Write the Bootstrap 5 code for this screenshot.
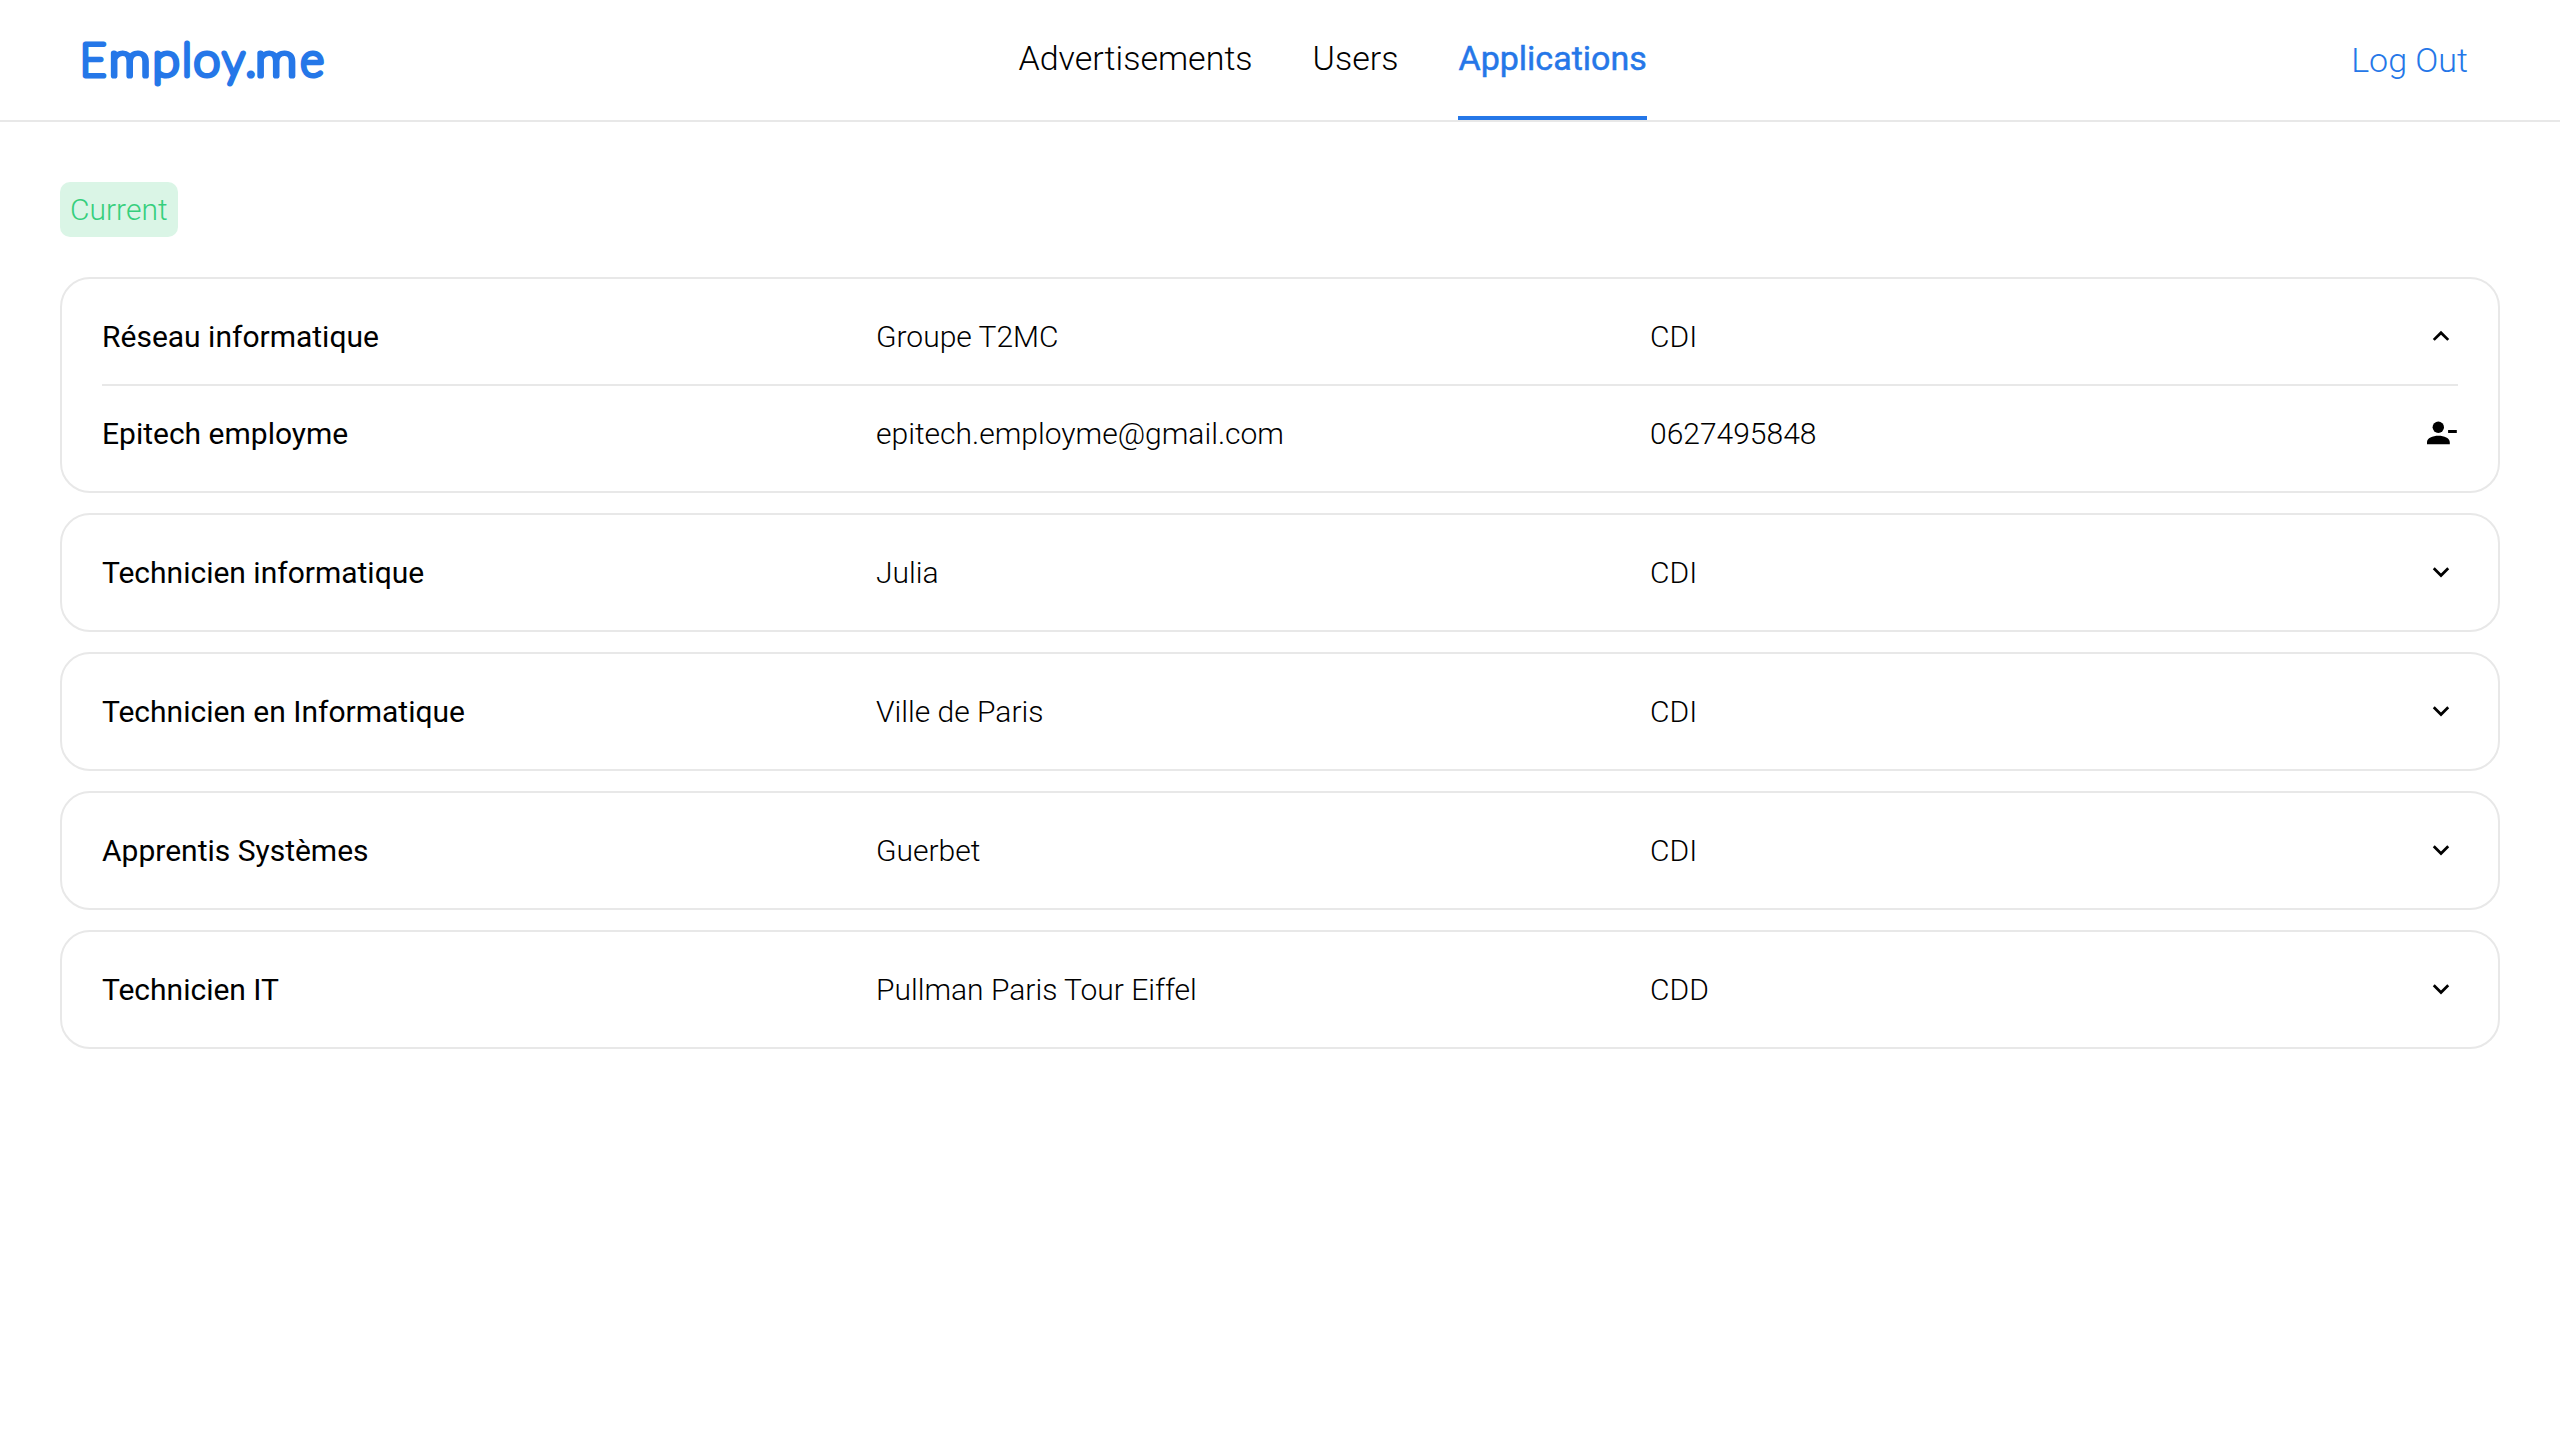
<!DOCTYPE html>
<html lang="en">
<head>
<meta charset="utf-8">
<meta name="viewport" content="width=device-width, initial-scale=1">
<title>Employ.me</title>
<link rel="stylesheet" href="https://cdn.jsdelivr.net/npm/bootstrap@5.3.0/dist/css/bootstrap.min.css">
<style>
body{font-family:Roboto,"Liberation Sans",sans-serif;font-weight:300;font-size:30px;line-height:normal;color:#000;background:#fff}
.topbar{height:122px;border-bottom:2px solid #e8e8e8;padding:0 92px 0 82px}
.brand-logo{display:block;width:232px;height:66px;overflow:visible}
.brand-logo text{font-family:Lato,sans-serif;font-weight:100;font-size:45px;fill:#2577e8;stroke:#2577e8;stroke-width:5.1px;stroke-linejoin:round}
.main-nav{gap:60px;font-size:34px}
.main-nav .nav-link{padding:0;height:120px;color:#000;display:flex;align-items:center;border-bottom:4px solid transparent}
.main-nav .nav-link.active{color:#2577e8;border-color:#2577e8;font-weight:400;-webkit-text-stroke:.5px #2577e8}
.logout{font-size:34px;color:#2577e8}
.page{padding:60px}
.status-tag{background:#daf5e6;color:#35cf7c;border-radius:10px;padding:10px;line-height:35px}
.jobs{gap:20px;margin-top:40px}
.job{border:2px solid #e8e8e8;border-radius:30px;padding:40px}
.cells{display:grid;grid-template-columns:1fr 1fr 1fr 34px;height:35px}
.cells>:first-child{font-weight:400}
.divider{border-top:2px solid #e8e8e8;margin:30px 0}
.ico{width:34px;height:35px;display:block}
</style>
</head>
<body>
<svg class="d-none">
<symbol id="up" viewBox="0 0 34 35"><path d="M17 11.8l-8.200 8.150 1.920 1.920L17 15.640l6.280 6.230 1.920-1.920z"/></symbol>
<symbol id="down" viewBox="0 0 34 35"><path d="M17 22.400l-8.200-8.150 1.920-1.920L17 18.560l6.280-6.230 1.920 1.920z"/></symbol>
<symbol id="remove" viewBox="0 0 34 35"><circle cx="14.300" cy="11.200" r="5.700"/><path d="M3 28.300v-2.100c0-4.200 5.600-6.500 11.400-6.500s11.400 2.300 11.400 6.500v2.100zM24.100 14h8.700v3h-8.700z"/></symbol>
</svg>
<header class="topbar d-flex align-items-center justify-content-between">
<a href="#" aria-label="Employ.me"><svg class="brand-logo" viewBox="82 27 232 66"><text y="75.700"><tspan x="79.900">E</tspan><tspan x="108.900" textLength="41.400" lengthAdjust="spacingAndGlyphs">m</tspan><tspan x="152.700" textLength="26.800" lengthAdjust="spacingAndGlyphs">p</tspan><tspan x="182.300">l</tspan><tspan x="193.700" textLength="26.300" lengthAdjust="spacingAndGlyphs">o</tspan><tspan x="222.600">y</tspan><tspan x="245.400">.</tspan><tspan x="255.600" textLength="41.400" lengthAdjust="spacingAndGlyphs">m</tspan><tspan x="300.400">e</tspan></text></svg></a>
<nav class="nav main-nav"><a class="nav-link" href="#">Advertisements</a><a class="nav-link" href="#">Users</a><a class="nav-link active" href="#">Applications</a></nav>
<a class="logout text-decoration-none" href="#">Log Out</a>
</header>
<main class="page">
<div class="d-flex"><span class="status-tag">Current</span></div>
<div class="jobs d-flex flex-column">
<section class="job">
<div class="cells"><span>Réseau informatique</span><span>Groupe T2MC</span><span>CDI</span><svg class="ico"><use href="#up"/></svg></div>
<div class="divider"></div>
<div class="cells"><span>Epitech employme</span><span>epitech.employme@gmail.com</span><span>0627495848</span><svg class="ico"><use href="#remove"/></svg></div>
</section>
<section class="job"><div class="cells"><span>Technicien informatique</span><span>Julia</span><span>CDI</span><svg class="ico"><use href="#down"/></svg></div></section>
<section class="job"><div class="cells"><span>Technicien en Informatique</span><span>Ville de Paris</span><span>CDI</span><svg class="ico"><use href="#down"/></svg></div></section>
<section class="job"><div class="cells"><span>Apprentis Systèmes</span><span>Guerbet</span><span>CDI</span><svg class="ico"><use href="#down"/></svg></div></section>
<section class="job"><div class="cells"><span>Technicien IT</span><span>Pullman Paris Tour Eiffel</span><span>CDD</span><svg class="ico"><use href="#down"/></svg></div></section>
</div>
</main>
<script src="https://cdn.jsdelivr.net/npm/bootstrap@5.3.0/dist/js/bootstrap.bundle.min.js"></script>
</body>
</html>
